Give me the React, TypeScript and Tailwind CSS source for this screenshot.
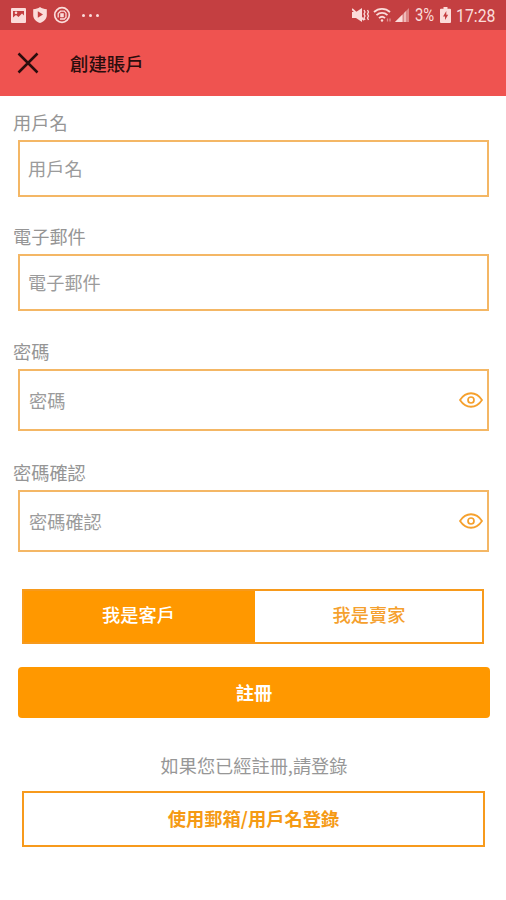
import React, { useState } from 'react';

const SANS = "font-['Noto_Sans_CJK_TC',sans-serif]";

const StatusBar: React.FC = () => (
  <div className="flex h-[30px] items-center justify-between bg-[#c43f41] px-[11px] font-['Roboto',sans-serif] text-[#fbdcda]">
    <div className="flex items-center">
      <svg width="15" height="15" viewBox="0 0 15 15">
        <path fill="currentColor" fillRule="evenodd" d="M1 0h13a1 1 0 0 1 1 1v13a1 1 0 0 1-1 1H1a1 1 0 0 1-1-1V1a1 1 0 0 1 1-1zM2 3v6.500L5 7l2.500 2L11 5.500 13 7.500V3z" />
        <circle cx="5" cy="4.800" r="1.300" fill="currentColor" />
      </svg>
      <svg className="ml-[7px]" width="14" height="16" viewBox="0 0 14 16">
        <path fill="currentColor" fillRule="evenodd" d="M7 0c2 1.500 4 2.100 6.800 2.200v6c0 3.800-3 6.300-6.800 7.800C3.200 14.500.2 12 .2 8.200v-6C3 2.100 5 1.500 7 0zM4.800 4.300v6.400L10 7.500z" />
      </svg>
      <svg className="ml-[6px]" width="18" height="18" viewBox="0 0 18 18" fill="none" stroke="currentColor">
        <circle cx="9" cy="9" r="7.300" strokeWidth="1.700" />
        <path d="M5.200 11.500V7.500L7.500 5.200h3.800l1.700 2v4l-1.700 1.800H7" strokeWidth="1.300" />
        <path d="M7.500 7.500h3v3.500h-3z" fill="currentColor" strokeWidth=".5" />
      </svg>
      <div className="ml-[11px] flex gap-[4px]">
        <span className="size-[3px] rounded-full bg-current" />
        <span className="size-[3px] rounded-full bg-current" />
        <span className="size-[3px] rounded-full bg-current" />
      </div>
    </div>

    <div className="flex items-center">
      <svg width="18" height="16" viewBox="0 0 18 16">
        <path fill="currentColor" d="M0 5h4l6-4v14l-6-4H0z" />
        <path stroke="currentColor" strokeWidth="1.300" fill="none" d="M12 3l1 2-1 2 1 2-1 2 1 2M15.500 3l1 2-1 2 1 2-1 2 1 2" />
        <path stroke="currentColor" strokeWidth="1.700" d="M0 2l12 11" />
      </svg>
      <svg className="ml-[3px]" width="19" height="16" viewBox="0 0 19 16" fill="none" stroke="currentColor" strokeWidth="1.800">
        <path d="M1 5c4.500-4.200 11.500-4.200 16 0M3.500 8.200c3.200-3 7.800-3 11 0M6 11.200c1.900-1.800 4.200-1.800 6 0" />
        <circle cx="9" cy="13.500" r="1.200" fill="currentColor" stroke="none" />
        <path strokeWidth="1.300" d="M14.500 11.500v3M17 11.500v3" opacity=".5" />
      </svg>
      <svg className="ml-[2px]" width="16" height="16" viewBox="0 0 16 16" fill="currentColor">
        <path opacity=".45" d="M15 1v14H1z" />
        <path d="M8.500 7.500V15H1z" />
        <path opacity=".6" d="M10 6l2-2v11h-2z" />
      </svg>
      <span className="ml-[5px] w-[20px] origin-left scale-x-[.85] pt-px text-[17.5px] leading-none">3%</span>
      <svg className="ml-[5px]" width="11" height="16" viewBox="0 0 11 16">
        <path fill="currentColor" fillRule="evenodd" d="M3.500 0h4v1.700H10a1 1 0 0 1 1 1V15a1 1 0 0 1-1 1H1a1 1 0 0 1-1-1V2.700a1 1 0 0 1 1-1h2.500zM6.300 4L3 9.500h2V13l3.200-5.300H6.300z" />
      </svg>
      <span className="ml-[5px] w-[39px] origin-left scale-x-[.88] pt-px text-[18px] leading-none">17:28</span>
    </div>
  </div>
);

const EyeIcon: React.FC = () => (
  <svg width="24" height="16" viewBox="0 0 24 16" fill="none" stroke="#f5a02d" strokeWidth="1.800">
    <path d="M1 8c6-9 16-9 22 0-6 9-16 9-22 0z" />
    <circle cx="12" cy="8" r="3" strokeWidth="1.700" />
  </svg>
);

interface FieldProps {
  label: string;
  password?: boolean;
}

const Field: React.FC<FieldProps> = ({ label, password }) => {
  const [visible, setVisible] = useState(false);

  return (
    <label className="block">
      <span className="block h-[26px] pl-[13px] text-[18.2px] leading-[26px] text-[#959595]">{label}</span>
      <span
        className={`ml-[18px] mr-[17px] mt-[5px] flex items-center border-2 border-[#f4b765] pr-[4px] ${
          password ? 'h-[62px] pl-[9px]' : 'h-[57px] pl-[8px]'
        }`}
      >
        <input
          type={password && !visible ? 'password' : 'text'}
          placeholder={label}
          className="h-full min-w-0 flex-1 pb-px text-[18.2px] text-[#555] outline-none placeholder:text-[#9b9b9b]"
        />
        {password && (
          <button type="button" onClick={() => setVisible(!visible)}>
            <EyeIcon />
          </button>
        )}
      </span>
    </label>
  );
};

export default function App() {
  const [role, setRole] = useState<'customer' | 'seller'>('customer');

  const roleClass = (active: boolean) => (active ? 'bg-[#ff9800] text-white' : 'bg-white text-[#f5a02d]');

  return (
    <div lang="zh-Hant" className={`h-[900px] w-[506px] overflow-hidden bg-white ${SANS}`}>
      <StatusBar />

      <header className="flex h-[66px] items-center bg-[#ef5350] pl-[17px] text-[#2b0d0d]">
        <svg width="22" height="22" viewBox="0 0 22 22" fill="none" stroke="currentColor" strokeWidth="2.500">
          <path d="M1.500 1.500l19 19M20.500 1.500l-19 19" />
        </svg>
        <h1 className="ml-[31px] text-[18.4px] font-medium leading-none">創建賬戶</h1>
      </header>

      <form onSubmit={(e) => e.preventDefault()}>
        <div className="flex flex-col pt-[13px]">
          <Field label="用戶名" />
          <div className="mt-[26px]"><Field label="電子郵件" /></div>
          <div className="mt-[27px]"><Field label="密碼" password /></div>
          <div className="mt-[28px]"><Field label="密碼確認" password /></div>
        </div>

        {/* Account type */}
        <div className="mx-[22px] mt-[37px] grid h-[55px] grid-cols-[231px_1fr] border-2 border-[#f79a1c] text-[18.2px] font-medium">
          <button type="button" className={`pb-[4px] pr-[2px] ${roleClass(role === 'customer')}`} onClick={() => setRole('customer')}>
            我是客戶
          </button>
          <button type="button" className={`pb-[4px] pl-[1px] ${roleClass(role === 'seller')}`} onClick={() => setRole('seller')}>
            我是賣家
          </button>
        </div>

        <button type="submit" className="mx-[18px] mt-[23px] block h-[51px] w-[472px] rounded-[4px] bg-[#ff9800] text-[18.2px] font-bold text-white">
          註冊
        </button>
      </form>

      <p className="mt-[34px] pl-[2px] text-center text-[18.2px] leading-[26px] text-[#979797]">如果您已經註冊,請登錄</p>
      <button type="button" className="mx-[22px] mt-[13px] block h-[56px] w-[463px] border-2 border-[#f79a1c] text-[18.3px] font-bold text-[#f59a14]">
        使用郵箱/用戶名登錄
      </button>
    </div>
  );
}
